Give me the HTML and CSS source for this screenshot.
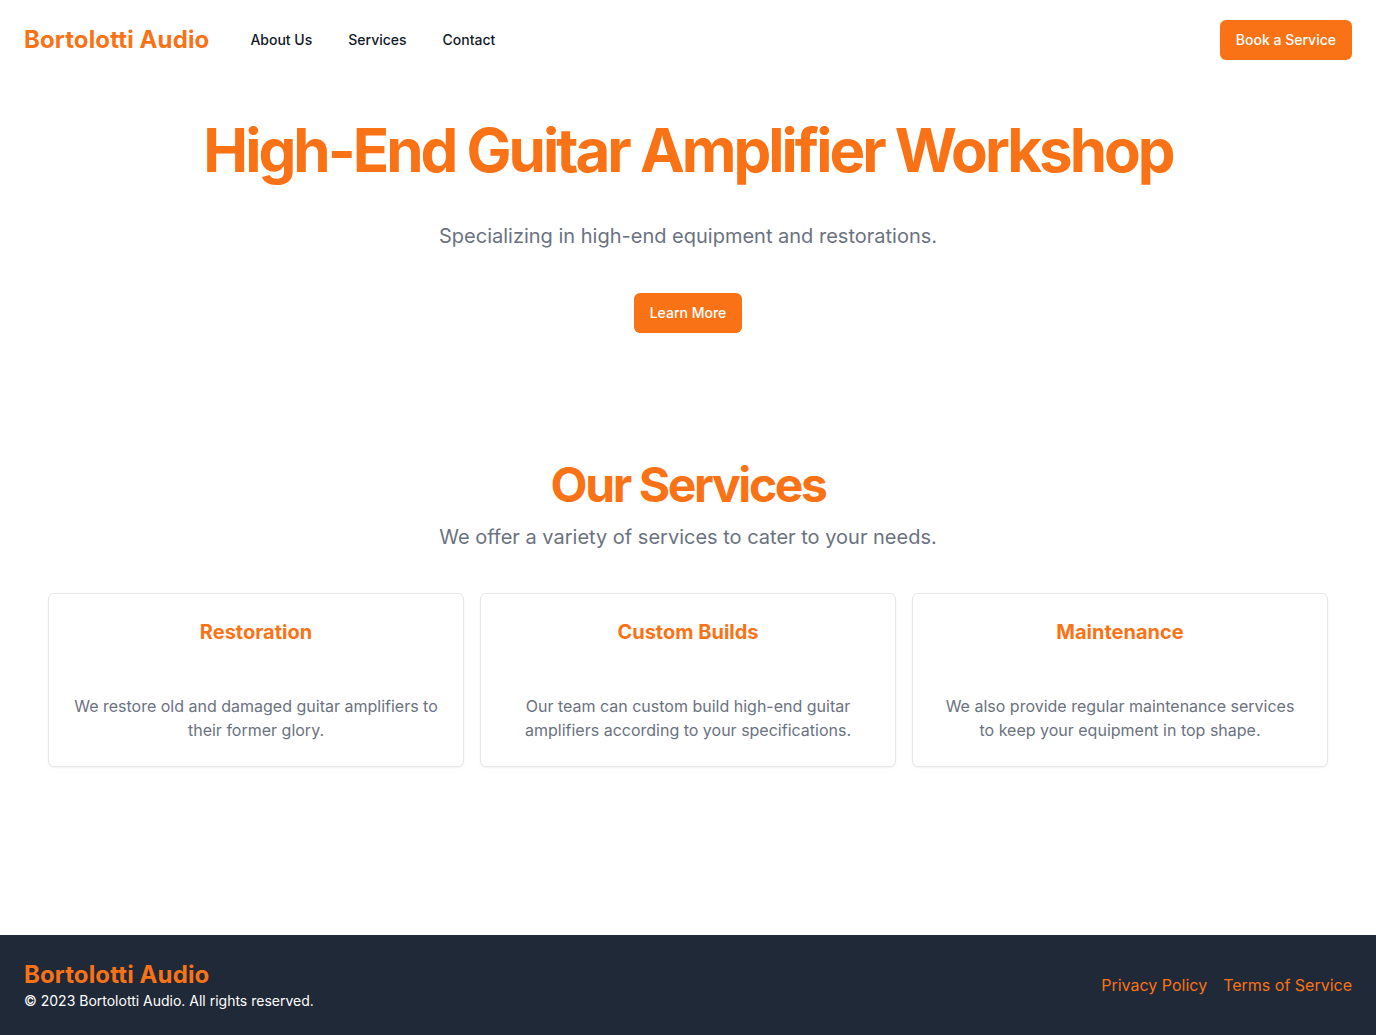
FILE: index.html
```html
<!DOCTYPE html>
<html lang="en">
<head>
<meta charset="utf-8">
<title>Bortolotti Audio</title>
<link rel="stylesheet" href="styles.css">
</head>
<body>
<header class="site-header">
  <div class="header-left">
    <a class="logo" href="#">Bortolotti Audio</a>
    <nav class="main-nav">
      <a href="#">About Us</a>
      <a href="#">Services</a>
      <a href="#">Contact</a>
    </nav>
  </div>
  <a class="btn" href="#">Book a Service</a>
</header>
<main class="main">
  <section class="hero">
    <h1 class="hero-title">High-End Guitar Amplifier Workshop</h1>
    <p class="hero-sub">Specializing in high-end equipment and restorations.</p>
    <a class="btn" href="#">Learn More</a>
  </section>
  <section class="services">
    <h2 class="services-title">Our Services</h2>
    <p class="services-sub">We offer a variety of services to cater to your needs.</p>
    <div class="cards">
      <div class="card">
        <h3 class="card-title">Restoration</h3>
        <p class="card-text">We restore old and damaged guitar amplifiers to their former glory.</p>
      </div>
      <div class="card">
        <h3 class="card-title">Custom Builds</h3>
        <p class="card-text">Our team can custom build high-end guitar amplifiers according to your specifications.</p>
      </div>
      <div class="card">
        <h3 class="card-title">Maintenance</h3>
        <p class="card-text">We also provide regular maintenance services to keep your equipment in top shape.</p>
      </div>
    </div>
  </section>
</main>
<footer class="site-footer">
  <div class="footer-left">
    <div class="footer-logo">Bortolotti Audio</div>
    <div class="copyright">© 2023 Bortolotti Audio. All rights reserved.</div>
  </div>
  <nav class="footer-nav">
    <a href="#">Privacy Policy</a>
    <a href="#">Terms of Service</a>
  </nav>
</footer>
</body>
</html>
```
FILE: styles.css
```css
* { box-sizing: border-box; }
html, body { margin: 0; padding: 0; }
body {
  font-family: Inter, "Noto Sans", sans-serif;
  color: #111827;
  background: #fff;
  min-height: 100vh;
  display: flex;
  flex-direction: column;
}
a { text-decoration: none; color: inherit; }
h1, h2, h3, p { margin: 0; }

.site-header {
  display: flex;
  align-items: center;
  justify-content: space-between;
  padding: 20px 24px;
}
.header-left { display: flex; align-items: center; }
.logo {
  color: #f97316;
  font-size: 24px;
  line-height: 32px;
  font-weight: 700;
  letter-spacing: 0.005em;
}
.main-nav { display: flex; gap: 36px; margin-left: 41px; }
.main-nav a {
  font-size: 14px;
  line-height: 20px;
  font-weight: 500;
  color: #111827;
}
.btn {
  display: inline-block;
  background: #f97316;
  color: #fff;
  font-size: 14px;
  line-height: 20px;
  font-weight: 500;
  padding: 10px 16px;
  border-radius: 6px;
}

.main { flex: 1; }

.hero {
  display: flex;
  flex-direction: column;
  align-items: center;
  text-align: center;
  padding-top: 38px;
}
.hero-title {
  color: #f97316;
  font-size: 60px;
  line-height: 64px;
  font-weight: 700;
  letter-spacing: -0.05em;
}
.hero-sub {
  margin-top: 40px;
  color: #6b7280;
  font-size: 20px;
  line-height: 28px;
}
.hero .btn { margin-top: 43px; }

.services {
  padding: 128px 48px 0;
  text-align: center;
}
.services-title {
  color: #f97316;
  font-size: 48px;
  line-height: 48px;
  font-weight: 700;
  letter-spacing: -0.05em;
}
.services-sub {
  margin-top: 14px;
  color: #6b7280;
  font-size: 20px;
  line-height: 28px;
}
.cards {
  margin-top: 42px;
  display: grid;
  grid-template-columns: repeat(3, 1fr);
  gap: 16px;
}
.card {
  border: 1px solid #e5e7eb;
  border-radius: 6px;
  box-shadow: 0 1px 2px rgba(0,0,0,0.05);
  padding: 24px 24px 24px;
  background: #fff;
}
.card-title {
  color: #f97316;
  font-size: 20px;
  line-height: 28px;
  font-weight: 700;
}
.card-text {
  margin-top: 48px;
  color: #6b7280;
  font-size: 16px;
  line-height: 24px;
}

.site-footer {
  background: #1f2937;
  display: flex;
  align-items: center;
  justify-content: space-between;
  padding: 24px;
}
.footer-logo {
  color: #f97316;
  font-size: 24px;
  line-height: 32px;
  font-weight: 700;
  letter-spacing: 0.005em;
}
.copyright {
  color: #fff;
  font-size: 14px;
  line-height: 20px;
}
.footer-nav { display: flex; gap: 16px; }
.footer-nav a {
  color: #f97316;
  font-size: 16px;
  line-height: 24px;
}
```
